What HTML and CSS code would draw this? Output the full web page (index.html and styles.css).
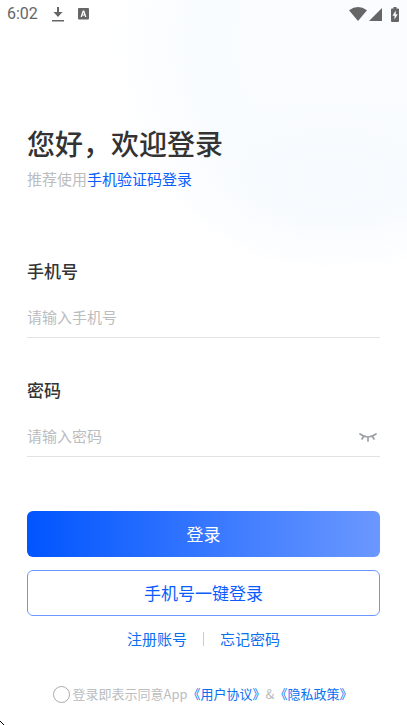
FILE: index.html
```html
<!DOCTYPE html>
<html lang="zh-CN">
<head>
<meta charset="utf-8">
<meta name="viewport" content="width=device-width, initial-scale=1">
<title>登录</title>
<link rel="stylesheet" href="styles.css">
</head>
<body>
<div class="screen">
  <header class="status">
    <div class="status-group">
      <span class="clock">6:02</span>
      <svg class="icon-download" width="12" height="16" viewBox="0 0 12 16" aria-hidden="true"><path d="M5 1h2v5h3.500L6 11 1.500 6H5zM0 14h12v1.500H0z"/></svg>
      <svg class="icon-app" width="11" height="12" viewBox="0 0 11 12" aria-hidden="true"><path fill-rule="evenodd" d="M1 0h9a1 1 0 0 1 1 1v9.500a1 1 0 0 1-1 1H1a1 1 0 0 1-1-1V1a1 1 0 0 1 1-1zM4.700 2.500 2.600 9h1.300l.5-1.500h2.200L7.100 9h1.300L6.300 2.500zM5.500 4.200l.7 2.200H4.800z"/></svg>
    </div>
    <div class="status-group status-right">
      <svg width="18" height="14" viewBox="0 0 18 14" aria-hidden="true"><path d="M0 3.200Q9-3.200 18 3.200L9 14z"/></svg>
      <svg class="icon-signal" width="13" height="13" viewBox="0 0 13 13" aria-hidden="true"><path d="M13 0v13H0z"/></svg>
      <svg class="icon-battery" width="8" height="15" viewBox="0 0 8 15" aria-hidden="true"><path fill-rule="evenodd" d="M2.500 0h3v1.500H7a1 1 0 0 1 1 1V14a1 1 0 0 1-1 1H1a1 1 0 0 1-1-1V2.500a1 1 0 0 1 1-1h1.500zM4.700 3.500 1.500 8.700h2V12.500l3.200-5.200h-2z"/></svg>
    </div>
  </header>

  <main class="content">
    <h1>您好，欢迎登录</h1>
    <p class="hint">推荐使用<a href="#code">手机验证码登录</a></p>

    <form class="form">
      <div class="field">
        <label for="phone">手机号</label>
        <div class="control">
          <input id="phone" type="tel" placeholder="请输入手机号">
        </div>
      </div>
      <div class="field">
        <label for="password">密码</label>
        <div class="control">
          <input id="password" type="password" placeholder="请输入密码">
          <button class="reveal" type="button" aria-label="显示密码">
            <svg width="18" height="12" viewBox="0 0 18 12" fill="none" stroke="#9da1a6" stroke-width="1.700" stroke-linecap="round" aria-hidden="true"><path d="M1 4Q9 10 17 4M4.200 7 3 9M9 7.500v3.500M13.800 7 15 9"/></svg>
          </button>
        </div>
      </div>
      <div class="actions">
        <button class="btn btn-primary" type="submit">登录</button>
        <button class="btn btn-outline" type="button">手机号一键登录</button>
      </div>
      <nav class="links">
        <a href="#register">注册账号</a>
        <span class="divider"></span>
        <a href="#forgot">忘记密码</a>
      </nav>
      <div class="agreement">
        <input id="agree" type="checkbox">
        <label for="agree">登录即表示同意App<a href="#terms">《用户协议》</a>&amp;<a href="#privacy">《隐私政策》</a></label>
      </div>
    </form>
  </main>
  <svg class="pointer" width="4" height="5" viewBox="0 0 4 5" aria-hidden="true"><path d="M0 1h1v1H0zM1 2h1v1H1zM2 3h1v1H2zM3 4h1v1H3z"/></svg>
</div>
</body>
</html>
```
FILE: styles.css
```css
* {
  box-sizing: border-box;
}

body {
  margin: 0;
  background: #fff;
  color: #333;
  font-family: "Noto Sans CJK SC", sans-serif;
}

a {
  color: #0a6ff0;
  text-decoration: none;
}

button,
input {
  font: inherit;
}

.screen {
  position: relative;
  min-height: 100vh;
  background:
    radial-gradient(ellipse 170px 90px at 82% 180px, #f6fafe 0%, rgba(246, 250, 254, 0) 100%) no-repeat,
    radial-gradient(circle 232px at 84% 44px, #fafcff 0%, #f9fcff 68%, #fff 100%) no-repeat;
}

.status {
  display: flex;
  justify-content: space-between;
  align-items: center;
  height: 28px;
  padding: 0 8px 0 7px;
  fill: #666;
}

.status-group {
  display: flex;
  align-items: center;
}

.status svg {
  display: block;
}

.clock {
  color: #666;
  font: 400 16px/20px Roboto, sans-serif;
}

.icon-download {
  margin: 0 14px;
}

.icon-signal {
  margin: 0 9px 0 2px;
}

.content {
  padding: 95px 27px 20px;
}

h1 {
  margin: 0;
  font-size: 28px;
  line-height: 40px;
  font-weight: 500;
}

.hint {
  margin: 5px 0 0;
  color: #bbbdc0;
  font-size: 15px;
  line-height: 22px;
}

.hint a {
  color: #0a5cff;
}

.form {
  margin-top: 69px;
}

.field {
  margin-bottom: 40px;
}

.field label {
  display: block;
  font-size: 17px;
  line-height: 24px;
  font-weight: 500;
}

.control {
  display: flex;
  align-items: center;
  height: 41px;
  margin-top: 14px;
  border-bottom: 1px solid #e2e2e2;
}

.control input {
  flex: 1;
  min-width: 0;
  height: 40px;
  padding: 0 0 2px;
  border: 0;
  outline: 0;
  background: transparent;
  color: #333;
  font-size: 15px;
}

.control input::placeholder {
  color: #bbbdc0;
  opacity: 1;
}

.reveal {
  display: flex;
  padding: 3px;
  border: 0;
  background: none;
}

.actions {
  display: grid;
  gap: 13px;
  margin-top: 54px;
}

.btn {
  height: 46px;
  padding: 0 0 2px;
  border-radius: 6px;
  font-size: 17px;
}

.btn-primary {
  border: 0;
  background: linear-gradient(90deg, #05f, #6b98ff);
  color: #fff;
}

.btn-outline {
  border: 1px solid #6b98ff;
  background: #fff;
  color: #0a5cff;
}

.links {
  display: flex;
  justify-content: center;
  align-items: center;
  gap: 16px;
  margin-top: 11px;
  font-size: 15px;
  line-height: 24px;
}

.divider {
  width: 1px;
  height: 14px;
  background: #ccc;
}

.agreement {
  display: flex;
  justify-content: center;
  align-items: center;
  gap: 3px;
  margin-top: 33px;
  padding-right: 2px;
  color: #bbbdc0;
  font-size: 13px;
  line-height: 20px;
}

.agreement input {
  appearance: none;
  flex: none;
  width: 17px;
  height: 17px;
  margin: 0;
  border: 1px solid #aaa;
  border-radius: 50%;
}

.agreement input:checked {
  background: #0a5cff;
}

.pointer {
  position: absolute;
  left: 0;
  bottom: 0;
  fill: #000;
}
```
